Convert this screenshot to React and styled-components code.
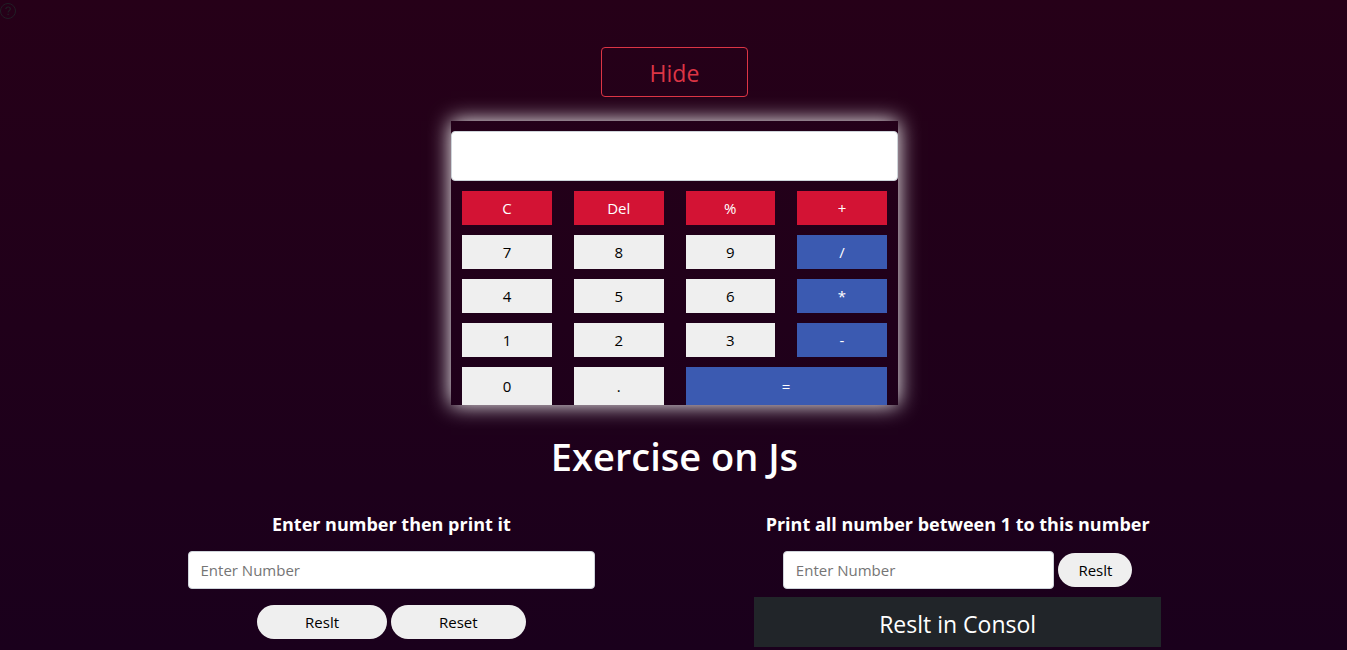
import React from 'react';
import styled, { createGlobalStyle } from 'styled-components';

const GlobalStyle = createGlobalStyle`
  *, *::before, *::after { box-sizing: border-box; }
  html { min-height: 100%; }
  body {
    margin: 0;
    min-height: 100vh;
    background: linear-gradient(#260018, #1a001c);
    color: #fff;
    font-family: "Open Sans", "Noto Sans", sans-serif;
    font-size: 15px;
    line-height: 24px;
  }
  button, input { font: inherit; margin: 0; }
  button { cursor: pointer; }
`;

const Page = styled.main`
  position: relative;
  display: flex;
  flex-direction: column;
  align-items: center;
  padding: 47px 0 3px 2px;
`;

const HelpIcon = styled.svg`
  position: absolute;
  top: 3px;
  left: 0;
  width: 16px;
  height: 16px;
  opacity: 0.85;
`;

const HideButton = styled.button`
  width: 11%;
  height: 50px;
  padding: 2px 0 0;
  border: 1px solid #dc3545;
  border-radius: 4px;
  background: transparent;
  color: #dc3545;
  font-size: 23px;
  line-height: 36px;
`;

const Calculator = styled.section`
  width: 33.2%;
  margin-top: 24px;
  padding-top: 10px;
  box-shadow: 0 0 20px #fff;
`;

const Field = styled.input`
  display: block;
  width: ${(p) => p.$width || '100%'};
  height: ${(p) => (p.$tall ? 50 : 38)}px;
  padding: 6px 12px;
  border: 1px solid #ced4da;
  border-radius: 4px;
  background: #fff;
  color: #212529;
  outline: 0;
  &::placeholder { color: #757575; opacity: 1; }
`;

const Keys = styled.div`
  display: grid;
  grid-template-columns: repeat(4, 1fr);
  grid-template-rows: repeat(4, 34px) 38px;
  gap: 10px 22px;
  margin-top: 10px;
  padding: 0 11px;
`;

const keyColors = {
  action: ['#d31334', '#fff'],
  operator: ['#3b5ab1', '#fff'],
  digit: ['#efefef', '#000'],
};

const Key = styled.button`
  grid-column: span ${(p) => p.$span || 1};
  padding: 0;
  border: 0;
  background: ${(p) => keyColors[p.$kind][0]};
  color: ${(p) => keyColors[p.$kind][1]};
`;

const Title = styled.h1`
  margin: 27px 0 0;
  font-size: 38px;
  font-weight: 600;
  line-height: 48px;
`;

const Exercises = styled.div`
  display: grid;
  grid-template-columns: 1fr 1fr;
  width: 84.2%;
  margin-top: 32px;
`;

const Exercise = styled.section`
  display: flex;
  flex-direction: column;
  align-items: center;
  width: 72%;
  margin: 0 auto;
`;

const Subtitle = styled.label`
  margin-bottom: 15px;
  font-size: 18px;
  font-weight: 700;
  line-height: 24px;
  white-space: nowrap;
`;

const Row = styled.div`
  display: flex;
  align-items: center;
  justify-content: center;
  gap: 4px;
  width: 100%;
  margin-top: ${(p) => (p.$spaced ? 16 : 0)}px;
`;

const Pill = styled.button`
  height: 34px;
  padding: 0 ${(p) => (p.$wide ? 48 : 20)}px;
  border: 0;
  border-radius: 20px;
  background: #efefef;
  color: #000;
`;

const Output = styled.output`
  display: block;
  width: 100%;
  height: 50px;
  margin-top: 8px;
  padding-top: 9px;
  background: #212529;
  font-size: 23px;
  line-height: 36px;
  text-align: center;
`;

const keys = [
  ['C', 'action'], ['Del', 'action'], ['%', 'action'], ['+', 'action'],
  ['7', 'digit'], ['8', 'digit'], ['9', 'digit'], ['/', 'operator'],
  ['4', 'digit'], ['5', 'digit'], ['6', 'digit'], ['*', 'operator'],
  ['1', 'digit'], ['2', 'digit'], ['3', 'digit'], ['-', 'operator'],
  ['0', 'digit'], ['.', 'digit'], ['=', 'operator', 2],
];

export default function App() {
  return (
    <>
      <GlobalStyle />
      <Page>
        <HelpIcon viewBox="0 0 16 16" fill="none" stroke="#212529" aria-hidden="true">
          <circle cx="8" cy="8" r="7.5" />
          <path d="M5.8 6.1C5.9 4.7 6.8 4 8.1 4s2.2.8 2.2 1.9c0 1.7-2.2 1.8-2.2 3.6" strokeWidth="1.2" />
          <path d="M8.1 10.7v1.3" strokeWidth="1.4" />
        </HelpIcon>
        <HideButton type="button">Hide</HideButton>
        <Calculator>
          <Field $tall type="text" aria-label="Calculator display" />
          <Keys>
            {keys.map(([label, kind, span]) => (
              <Key key={label} type="button" $kind={kind} $span={span}>{label}</Key>
            ))}
          </Keys>
        </Calculator>
        <Title>Exercise on Js</Title>
        <Exercises>
          <Exercise>
            <Subtitle htmlFor="print-number">Enter number then print it</Subtitle>
            <Field id="print-number" type="text" placeholder="Enter Number" />
            <Row $spaced>
              <Pill $wide type="button">Reslt</Pill>
              <Pill $wide type="button">Reset</Pill>
            </Row>
          </Exercise>
          <Exercise>
            <Subtitle htmlFor="range-number">Print all number between 1 to this number</Subtitle>
            <Row>
              <Field id="range-number" $width="66.6%" type="text" placeholder="Enter Number" />
              <Pill type="button">Reslt</Pill>
            </Row>
            <Output>Reslt in Consol</Output>
          </Exercise>
        </Exercises>
      </Page>
    </>
  );
}
